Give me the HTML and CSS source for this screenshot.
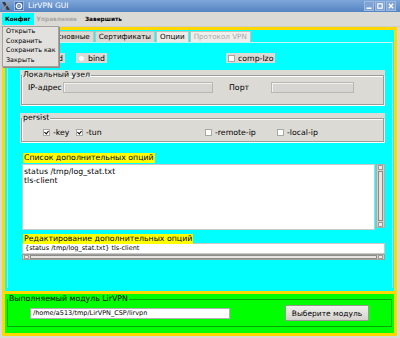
FILE: index.html
```html
<!DOCTYPE html>
<html lang="ru">
<head>
    <meta charset="UTF-8">
    <title>LirVPN GUI</title>
    <link rel="stylesheet" href="styles.css">
</head>
<body>
    <div id="window">
        <div class="titlebar">
            <svg class="x-logo" width="10" height="10" viewBox="0 0 10 10">
                <path d="M1 1 L4 1 L9 9 L6 9 Z" fill="#3a3a3a"/>
                <path d="M9 1 L7.5 1 L1 9 L2.5 9 Z" fill="#9a9a9a"/>
            </svg>
            <span class="app-icon">
                <svg width="8" height="8" viewBox="0 0 8 8">
                    <circle cx="4" cy="4" r="2.6" fill="none" stroke="#fff" stroke-width="1.4"/>
                    <circle cx="4" cy="4" r="0.8" fill="#fff"/>
                </svg>
            </span>
            <span class="title">LirVPN GUI</span>
            <div class="wm-buttons">
                <span class="wm-btn">
                    <svg width="8" height="8" viewBox="0 0 8 8"><rect x="1.5" y="5.5" width="5" height="1.5" fill="#fff"/></svg>
                </span>
                <span class="wm-btn">
                    <svg width="8" height="8" viewBox="0 0 8 8"><rect x="1.8" y="1.8" width="4.4" height="4.4" fill="none" stroke="#fff" stroke-width="1.2"/></svg>
                </span>
                <span class="wm-btn">
                    <svg width="8" height="8" viewBox="0 0 8 8"><path d="M1.8 1.8 L6.2 6.2 M6.2 1.8 L1.8 6.2" stroke="#fff" stroke-width="1.4"/></svg>
                </span>
            </div>
        </div>

        <div class="menubar">
            <span class="menu-item active">Конфиг</span>
            <span class="menu-item disabled">Управление</span>
            <span class="menu-item">Завершить</span>
        </div>

        <div class="dropdown">
            <div class="dropdown-item">Открыть</div>
            <div class="dropdown-item">Сохранить</div>
            <div class="dropdown-item">Сохранить как</div>
            <div class="dropdown-item">Закрыть</div>
        </div>

        <div class="outer">
            <div class="main">
                <div class="tabs">
                    <span class="tab">Основные</span>
                    <span class="tab">Сертификаты</span>
                    <span class="tab current">Опции</span>
                    <span class="tab disabled">Протокол VPN</span>
                </div>
                <div class="pane">
                    <div class="top-row">
                        <span class="checkbutton first"><span class="box"></span>nobind</span>
                        <span class="checkbutton"><span class="box radio"></span>bind</span>
                        <span class="checkbutton"><span class="box"></span>comp-lzo</span>
                    </div>

                    <div class="group local">
                        <fieldset>
                            <legend>Локальный узел</legend>
                            <div class="field-row">
                                <span class="field-label">IP-адрес</span>
                                <span class="entry ip"></span>
                                <span class="field-label port-label">Порт</span>
                                <span class="entry port"></span>
                            </div>
                        </fieldset>
                    </div>

                    <div class="group persist">
                        <fieldset>
                            <legend>persist</legend>
                            <div class="persist-row">
                                <span class="check"><span class="box checked"></span>-key</span>
                                <span class="check"><span class="box checked"></span>-tun</span>
                                <span class="check"><span class="box"></span>-remote-ip</span>
                                <span class="check"><span class="box"></span>-local-ip</span>
                            </div>
                        </fieldset>
                    </div>

                    <div class="caption">Список дополнительных опций</div>
                    <div class="text-area">
                        <div class="text-body">status /tmp/log_stat.txt<br>tls-client</div>
                        <div class="vscroll">
                            <span class="arrow"></span>
                            <span class="thumb"></span>
                            <span class="arrow"></span>
                        </div>
                    </div>

                    <div class="caption edit">Редактирование дополнительных опций</div>
                    <div class="edit-entry">{status /tmp/log_stat.txt} tls-client</div>
                    <div class="hscroll">
                        <span class="arrow"></span>
                        <span class="thumb"></span>
                        <span class="arrow"></span>
                    </div>
                </div>
            </div>

            <div class="module">
                <fieldset>
                    <legend>Выполняемый модуль LirVPN</legend>
                    <div class="module-row">
                        <span class="module-entry">/home/a513/tmp/LirVPN_CSP/lirvpn</span>
                        <button class="module-btn">Выберите модуль</button>
                    </div>
                </fieldset>
            </div>
        </div>
    </div>
</body>
</html>
```

FILE: styles.css
```css
body {
    margin: 0;
    padding: 0;
    font-family: "DejaVu Sans", sans-serif;
    font-size: 7.8px;
    color: #000;
}

#window {
    position: relative;
    width: 400px;
    height: 338px;
    background-color: #dcdad5;
    overflow: hidden;
}

/* title bar */
.titlebar {
    display: flex;
    align-items: center;
    height: 12px;
    background: linear-gradient(#7ea6d9, #5584c2);
    color: #fff;
}

.x-logo {
    margin-left: 1px;
}

.app-icon {
    display: flex;
    align-items: center;
    justify-content: center;
    width: 8px;
    height: 8px;
    margin-left: 3px;
    background-color: #3f6fb0;
    border: 1px solid #9ab9e0;
}

.title {
    margin-left: 4px;
    font-size: 7.5px;
    line-height: 12px;
}

.wm-buttons {
    display: flex;
    margin-left: auto;
    margin-right: 4px;
    gap: 1px;
}

.wm-btn {
    display: flex;
    width: 8px;
    height: 8px;
    background-color: #7fa4d3;
    border: 1px solid #9dbbe2;
}

/* menu */
.menubar {
    display: flex;
    align-items: center;
    height: 14px;
    padding-left: 2px;
    font-size: 5.8px;
    font-weight: bold;
    border-bottom: 1px solid #cfcdc8;
}

.menu-item {
    padding: 0 3px;
    line-height: 12px;
    white-space: nowrap;
}

.menu-item.active {
    background-color: #00ffff;
}

.menu-item.disabled {
    color: #a9a8a4;
    margin-right: 2px;
}

.dropdown {
    position: absolute;
    left: 2px;
    top: 26px;
    width: 55px;
    height: 39px;
    background-color: #e2e1de;
    border: 1px solid #a4a29d;
    box-shadow: 1px 1px 0 #8d8b87;
    font-size: 6.4px;
    z-index: 5;
}

.dropdown-item {
    height: 9.6px;
    line-height: 9.6px;
    padding-left: 3px;
    white-space: nowrap;
}

/* yellow outer box */
.outer {
    width: 389px;
    margin-left: 2px;
    padding: 3px;
    background-color: #ffd800;
}

.main {
    height: 261px;
    background-color: #00ffff;
}

.tabs {
    display: flex;
    height: 11px;
    padding-top: 1px;
    padding-left: 43px;
    font-size: 7.2px;
}

.tab {
    height: 10px;
    line-height: 10px;
    padding: 0 3px;
    margin-right: 1px;
    background-color: #dcdad5;
    border: 1px solid #c4c2bd;
    border-bottom: 0;
    white-space: nowrap;
}

.tab.current {
    background-color: #ecebe8;
}

.tab.disabled {
    color: #a8a8a8;
    background-color: #eeeeec;
}

.pane {
    height: 245px;
    margin: 0 1px 0 2px;
    padding: 0 7px 0 12px;
    border: 1px solid #c8f4f4;
    border-bottom: 0;
}

.top-row {
    display: grid;
    grid-template-columns: 45px 139px auto;
    column-gap: 11px;
    justify-content: start;
    padding-top: 10px;
}

.checkbutton {
    display: flex;
    align-items: center;
    justify-self: start;
    height: 10px;
    padding: 0 2px;
    background-color: #dcdad5;
    white-space: nowrap;
}

.checkbutton.first {
    justify-self: end;
}

.box {
    width: 5px;
    height: 5px;
    margin-right: 3px;
    background-color: #fff;
    border: 1px solid #a9a8a4;
    position: relative;
}

.box.radio {
    border-radius: 50%;
    border-color: #d8d8d8;
}

.box.checked::after {
    content: "";
    position: absolute;
    left: 1px;
    top: 0;
    width: 2px;
    height: 3px;
    border-right: 1px solid #000;
    border-bottom: 1px solid #000;
    transform: rotate(40deg);
}

/* frames */
.group {
    background-color: #dcdad5;
    padding: 0 1px 1px 1px;
}

.group fieldset {
    margin: 0;
    padding: 0;
    border: 1px solid #9e9c98;
    box-shadow: inset 1px 1px 0 #fff, 1px 1px 0 #fff;
}

.group legend {
    padding: 0 1px;
    margin-left: 0;
    line-height: 10px;
}

.local {
    margin-top: 7px;
}

.local fieldset {
    height: 35px;
    box-sizing: border-box;
}

.field-row {
    display: flex;
    align-items: center;
    padding-top: 2px;
    padding-left: 6px;
}

.field-label {
    width: 35px;
}

.port-label {
    margin-left: 16px;
    width: 42px;
}

.entry {
    height: 9px;
    background-color: #d6d5d2;
    border: 1px solid #b9b7b2;
    box-shadow: inset 1px 1px 0 #f2f2f2;
}

.entry.ip {
    width: 148px;
}

.entry.port {
    width: 81px;
}

.persist {
    margin-top: 7px;
}

.persist fieldset {
    height: 29px;
    box-sizing: border-box;
}

.persist-row {
    display: grid;
    grid-template-columns: 33px 129px 72px auto;
    align-items: center;
    padding-top: 5px;
    padding-left: 21px;
}

.check {
    display: flex;
    align-items: center;
}

/* option lists */
.caption {
    display: inline-block;
    margin-top: 10px;
    margin-left: 3px;
    padding: 0 1px;
    line-height: 10px;
    background-color: #ffff00;
}

.text-area {
    display: flex;
    margin-left: 2px;
    margin-top: 1px;
}

.text-body {
    width: 353px;
    height: 62px;
    padding-left: 1px;
    padding-top: 2px;
    background-color: #fff;
    border: 1px solid #c9c9c9;
    line-height: 9px;
}

.vscroll {
    display: flex;
    flex-direction: column;
    width: 5px;
    height: 62px;
    margin-left: 1px;
    padding: 0 1px;
    background-color: #d2d0cc;
    border: 1px solid #b0aea9;
}

.vscroll .arrow {
    height: 3px;
    background-color: #ecebe8;
    border: 1px solid #9e9c98;
}

.vscroll .thumb {
    flex: 1;
    margin: 1px 0;
    background-color: #e6e5e2;
    border: 1px solid #8e8c88;
}

.caption.edit {
    margin-top: 4px;
}

.edit-entry {
    height: 9px;
    margin-left: 2px;
    padding-left: 2px;
    background-color: #fff;
    border: 1px solid #c9c9c9;
    font-size: 6.5px;
    line-height: 9px;
    margin-top: -1px;
}

.hscroll {
    display: flex;
    height: 4px;
    margin-left: 2px;
    padding: 0 1px;
    background-color: #d2d0cc;
    border: 1px solid #a09e9a;
}

.hscroll .arrow {
    width: 3px;
    background-color: #ecebe8;
    border: 1px solid #9e9c98;
}

.hscroll .thumb {
    flex: 1;
    margin: 0 1px;
    background-color: #e6e5e2;
    border: 1px solid #8e8c88;
}

/* executable module */
.module {
    height: 39px;
    margin-top: 3px;
    padding: 0 2px;
    background-color: #00ff00;
}

.module fieldset {
    margin: 0;
    padding: 0;
    height: 31px;
    border: 1px solid #00a800;
}

.module legend {
    padding: 0 1px;
    line-height: 10px;
}

.module-row {
    display: flex;
    align-items: center;
    padding-left: 22px;
    padding-top: 1px;
}

.module-entry {
    width: 196px;
    height: 9px;
    padding-left: 2px;
    background-color: #fff;
    border: 1px solid #b0b0b0;
    font-size: 6.5px;
    line-height: 9px;
}

.module-btn {
    width: 84px;
    height: 16px;
    margin-left: 55px;
    padding: 0;
    font-family: "DejaVu Sans", sans-serif;
    font-size: 7.5px;
    color: #000;
    background: linear-gradient(#f0efed, #d4d2cd);
    border: 1px solid #9a9893;
    border-radius: 1px;
}
```
